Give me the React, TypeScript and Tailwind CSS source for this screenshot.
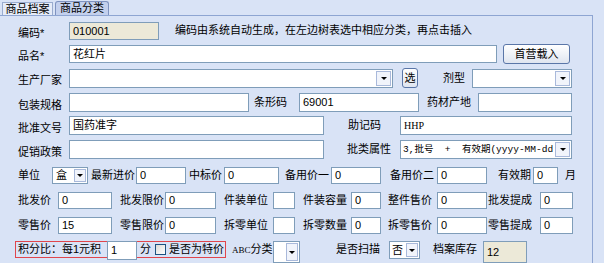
import React from 'react';

type BoxProps = { className?: string; value?: string; beige?: boolean };

// plain text box, XP style
function Box({ className = '', value = '', beige = false }: BoxProps) {
  return (
    <div
      className={`${className} h-full shrink-0 border border-[#7f9db9] ${
        beige ? 'bg-[#ece9d8]' : 'bg-white'
      } pl-[3px] flex items-center overflow-hidden whitespace-nowrap`}
    >
      {value}
    </div>
  );
}

function Arrow({ small = false }: { small?: boolean }) {
  return (
    <div
      className={`${
        small ? 'w-[12px]' : 'w-[15px]'
      } shrink-0 m-px border border-[#a9b9db] bg-[#f1f4fb] flex items-center justify-center`}
    >
      <div className="w-0 h-0 border-x-[3px] border-t-[3px] border-x-transparent border-t-black" />
    </div>
  );
}

type SelectProps = { className?: string; value?: string; small?: boolean; textClass?: string };

function Select({ className = '', value = '', small = false, textClass = 'pl-[3px]' }: SelectProps) {
  return (
    <div className={`${className} h-full shrink-0 border border-[#7f9db9] bg-white flex items-stretch`}>
      <div className={`${textClass} flex-1 min-w-0 flex items-center overflow-hidden whitespace-nowrap`}>{value}</div>
      <Arrow small={small} />
    </div>
  );
}

function Btn({ className = '', label }: { className?: string; label: string }) {
  return (
    <div
      className={`${className} shrink-0 rounded-[3px] border border-[#5a76a8] bg-gradient-to-b from-white to-[#dfe5f0] flex items-center justify-center`}
    >
      {label}
    </div>
  );
}

const Lbl = ({ className = '', text }: { className?: string; text: string }) => (
  <span className={`${className} shrink-0 whitespace-nowrap`}>{text}</span>
);

export default function App() {
  return (
    <div className="w-[604px] h-[263px] overflow-hidden bg-[#d9e3f6] text-black text-[11px] leading-none font-['Liberation_Sans','Noto_Sans_CJK_SC',sans-serif]">
      {/* tabs */}
      <div className="flex items-end h-[15px] pl-[2px]">
        <div className="w-[51px] h-[13px] border border-b-0 border-[#9aaccf] bg-[#e6ecf8] flex items-center justify-center">
          商品档案
        </div>
        <div className="ml-[2px] w-[54px] h-[14px] rounded-t-[3px] border border-b-0 border-[#7f93c0] bg-[#c3d0ed] flex items-center justify-center">
          商品分类
        </div>
      </div>

      {/* panel */}
      <div className="w-[593px] h-[248px] border-t border-r border-[#8ea5d2]">
        {/* 编码 */}
        <div className="mt-[6px] h-[18px] flex items-center">
          <Lbl className="w-[69px] pl-[18px] pt-[5px]" text="编码*" />
          <Box className="w-[90px]" value="010001" beige />
          <Lbl className="ml-[16px] pb-[2px]" text="编码由系统自动生成，在左边树表选中相应分类，再点击插入" />
        </div>

        {/* 品名 */}
        <div className="mt-[4px] h-[20px] flex items-center">
          <Lbl className="w-[69px] pl-[18px] pt-[5px]" text="品名*" />
          <div className="h-[18px] flex">
            <Box className="w-[428px]" value="花红片" />
          </div>
          <Btn className="ml-[6px] w-[67px] h-[20px]" label="首营载入" />
        </div>

        {/* 生产厂家 */}
        <div className="mt-[4px] h-[20px] flex items-center">
          <Lbl className="w-[69px] pl-[18px] pt-[5px]" text="生产厂家" />
          <div className="h-[19px] flex">
            <Select className="w-[324px]" />
          </div>
          <Btn className="ml-[9px] w-[16px] h-[20px]" label="选" />
          <Lbl className="ml-[25px] w-[29px]" text="剂型" />
          <div className="h-[19px] flex">
            <Select className="w-[100px]" />
          </div>
        </div>

        {/* 包装规格 */}
        <div className="mt-[5px] h-[19px] flex items-center">
          <Lbl className="w-[69px] pl-[18px] pt-[5px]" text="包装规格" />
          <Box className="w-[180px]" />
          <Lbl className="ml-[5px] w-[45px]" text="条形码" />
          <Box className="w-[120px]" value="69001" />
          <Lbl className="ml-[8px] w-[51px]" text="药材产地" />
          <Box className="w-[94px]" />
        </div>

        {/* 批准文号 */}
        <div className="mt-[4px] h-[19px] flex items-center">
          <Lbl className="w-[69px] pl-[18px] pt-[5px]" text="批准文号" />
          <Box className="w-[255px]" value="国药准字" />
          <Lbl className="ml-[24px] w-[52px]" text="助记码" />
          <Box className="w-[172px] font-['Liberation_Serif',serif] text-[10px]" value="HHP" />
        </div>

        {/* 促销政策 */}
        <div className="mt-[5px] h-[19px] flex items-center">
          <Lbl className="w-[69px] pl-[18px] pt-[5px]" text="促销政策" />
          <Box className="w-[255px]" />
          <Lbl className="ml-[23px] w-[53px]" text="批类属性" />
          <Select
            className="w-[172px]"
            textClass="pl-[2px] font-['Liberation_Mono','Noto_Sans_CJK_SC',monospace] text-[9.5px] whitespace-pre"
            value="3,批号  +  有效期(yyyy-MM-dd)"
          />
        </div>

        {/* 单位 */}
        <div className="mt-[8px] h-[17px] flex items-center">
          <Lbl className="ml-[18px] w-[34px]" text="单位" />
          <Select className="w-[36px]" value="盒" small />
          <Lbl className="ml-[3px] w-[45px]" text="最新进价" />
          <Box className="w-[50px]" value="0" />
          <Lbl className="ml-[3px] w-[35px]" text="中标价" />
          <Box className="w-[55px]" value="0" />
          <Lbl className="ml-[6px] w-[46px]" text="备用价一" />
          <Box className="w-[50px]" value="0" />
          <Lbl className="ml-[9px] w-[47px]" text="备用价二" />
          <Box className="w-[50px]" value="0" />
          <Lbl className="ml-[11px] w-[35px]" text="有效期" />
          <Box className="w-[25px]" value="0" />
          <Lbl className="ml-[7px]" text="月" />
        </div>

        {/* 批发价 */}
        <div className="mt-[8px] h-[17px] flex items-center">
          <Lbl className="ml-[18px] w-[40px]" text="批发价" />
          <Box className="w-[54px]" value="0" />
          <Lbl className="ml-[8px] w-[45px]" text="批发限价" />
          <Box className="w-[51px]" value="0" />
          <Lbl className="ml-[8px] w-[49px]" text="件装单位" />
          <Box className="w-[22px]" />
          <Lbl className="ml-[8px] w-[48px]" text="件装容量" />
          <Box className="w-[30px]" value="0" />
          <Lbl className="ml-[7px] w-[49px]" text="整件售价" />
          <Box className="w-[50px]" value="0" />
          <Lbl className="ml-[1px] w-[52px]" text="批发提成" />
          <Box className="w-[33px]" value="0" />
        </div>

        {/* 零售价 */}
        <div className="mt-[8px] h-[17px] flex items-center">
          <Lbl className="ml-[18px] w-[40px]" text="零售价" />
          <Box className="w-[54px]" value="15" />
          <Lbl className="ml-[8px] w-[45px]" text="零售限价" />
          <Box className="w-[51px]" value="0" />
          <Lbl className="ml-[8px] w-[49px]" text="拆零单位" />
          <Box className="w-[22px]" />
          <Lbl className="ml-[8px] w-[48px]" text="拆零数量" />
          <Box className="w-[30px]" value="0" />
          <Lbl className="ml-[7px] w-[49px]" text="拆零售价" />
          <Box className="w-[50px]" value="0" />
          <Lbl className="ml-[1px] w-[52px]" text="零售提成" />
          <Box className="w-[33px]" value="0" />
        </div>

        {/* 积分 */}
        <div className="mt-[7px] h-[19px] flex items-start">
          <div className="ml-[15px] w-[211px] h-[17px] border border-[#e0464c] flex items-start shrink-0">
            <Lbl className="w-[91px] pl-[2px] pt-[2px]" text="积分比：每1元积" />
            <div className="-mt-px h-[19px] flex">
              <Box className="w-[30px]" value="1" />
            </div>
            <Lbl className="ml-[3px] pt-[2px]" text="分" />
            <div className="ml-[4px] mt-[2px] w-[11px] h-[11px] border border-[#1c5180] bg-gradient-to-br from-[#dcdcd7] to-white shrink-0" />
            <Lbl className="ml-[3px] pt-[2px]" text="是否为特价" />
          </div>
          <span className="ml-[6px] w-[41px] pt-[3px] shrink-0 whitespace-nowrap">
            <span className="font-['Liberation_Serif',serif] text-[9px]">ABC</span>分类
          </span>
          <div className="h-[22px] flex">
            <Select className="w-[27px]" small />
          </div>
          <Lbl className="ml-[36px] w-[53px] pt-[3px]" text="是否扫描" />
          <div className="h-[18px] flex">
            <Select className="w-[31px]" value="否" small textClass="pl-[2px]" />
          </div>
          <Lbl className="ml-[13px] w-[50px] pt-[3px]" text="档案库存" />
          <div className="h-[22px] flex">
            <Box className="w-[44px]" value="12" beige />
          </div>
        </div>
      </div>
    </div>
  );
}
